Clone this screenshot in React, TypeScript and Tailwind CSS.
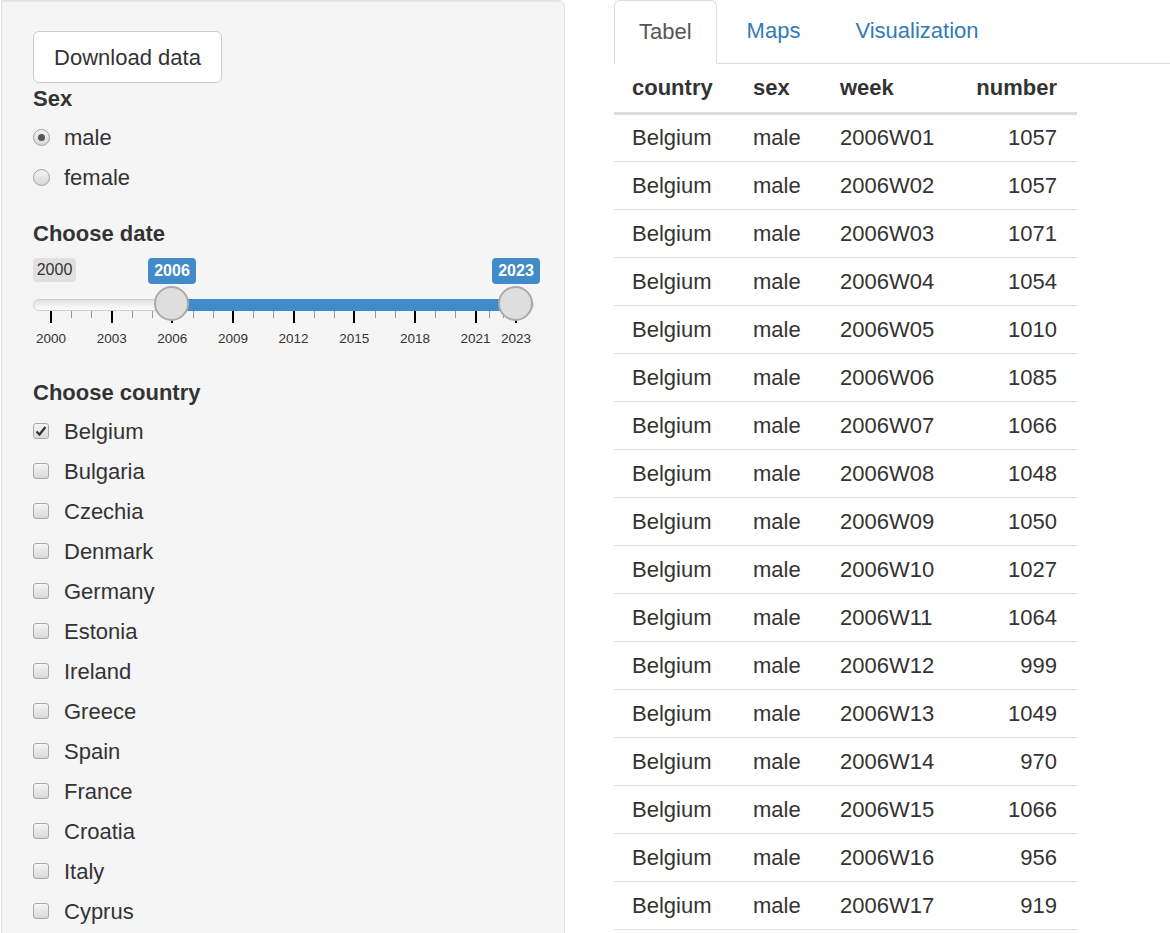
import React from "react";

const countries = [
  "Belgium",
  "Bulgaria",
  "Czechia",
  "Denmark",
  "Germany",
  "Estonia",
  "Ireland",
  "Greece",
  "Spain",
  "France",
  "Croatia",
  "Italy",
  "Cyprus",
];

const numbers = [1057, 1057, 1071, 1054, 1010, 1085, 1066, 1048, 1050, 1027, 1064, 999, 1049, 970, 1066, 956, 919];

const rows = numbers.map((n, i) => ({
  country: "Belgium",
  sex: "male",
  week: `2006W${String(i + 1).padStart(2, "0")}`,
  number: n,
}));

// slider geometry, px inside the slider box (box starts at x=32)
const yearX = (y: number) => 18 + (y - 2000) * 20.22;
const majors = [2000, 2003, 2006, 2009, 2012, 2015, 2018, 2021, 2023];
const minors = [2001, 2002, 2004, 2005, 2007, 2008, 2010, 2011, 2013, 2014, 2016, 2017, 2019, 2020];

const Radio = ({ checked }: { checked?: boolean }) => (
  <span className="w-[17px] h-[17px] rounded-full border border-[#a0a0a0] bg-gradient-to-b from-[#f4f4f4] to-[#d8d8d8] flex items-center justify-center shrink-0">
    {checked && <span className="w-[7px] h-[7px] rounded-full bg-[#555]"></span>}
  </span>
);

const Checkbox = ({ checked }: { checked?: boolean }) => (
  <span className="w-[16px] h-[16px] rounded-[3px] border border-[#a9a9a9] bg-gradient-to-b from-[#f6f6f6] to-[#dadada] flex items-center justify-center shrink-0">
    {checked && (
      <svg width="12" height="12" viewBox="0 0 12 12">
        <path d="M1.5 6.5 L4.5 9.5 L10.5 2" fill="none" stroke="#333" strokeWidth="2.2" />
      </svg>
    )}
  </span>
);

const DateSlider = () => (
  <div className="relative w-[501px] h-[106px]">
    {/* min label */}
    <div className="absolute left-0 top-[8px] h-[24px] w-[43px] rounded-[4px] bg-[#e0e0e0] text-[16px] leading-[24px] text-center text-[#333]">
      2000
    </div>
    {/* track */}
    <div className="absolute left-0 top-[49px] w-[501px] h-[12px] rounded-full border border-[#cfcfcf] bg-gradient-to-b from-[#e2e2e2] to-[#fdfdfd]"></div>
    <div className="absolute left-[139px] top-[49px] w-[344px] h-[12px] bg-[#428bca]"></div>
    {/* grid */}
    {minors.map((y) => (
      <div key={y} className="absolute top-[61px] w-px h-[7px] bg-[#999]" style={{ left: yearX(y) }}></div>
    ))}
    <div className="absolute top-[61px] w-px h-[7px] bg-[#999]" style={{ left: 456 }}></div>
    <div className="absolute top-[61px] w-px h-[7px] bg-[#999]" style={{ left: 470 }}></div>
    {majors.map((y) => (
      <div key={y} className="absolute top-[61px] w-[2px] h-[12px] bg-black" style={{ left: (y === 2023 ? 483 : yearX(y)) - 1 }}></div>
    ))}
    {majors.map((y) => (
      <div
        key={y}
        className="absolute top-[80px] w-[40px] -ml-[20px] text-center text-[13.5px] leading-[18px] text-[#333]"
        style={{ left: y === 2023 ? 483 : yearX(y) }}
      >
        {y}
      </div>
    ))}
    {/* from / to labels */}
    <div className="absolute left-[115px] top-[8px] h-[26px] w-[48px] rounded-[4px] bg-[#428bca] text-white font-bold text-[16px] leading-[26px] text-center">
      2006
    </div>
    <div className="absolute left-[459px] top-[8px] h-[26px] w-[48px] rounded-[4px] bg-[#428bca] text-white font-bold text-[16px] leading-[26px] text-center">
      2023
    </div>
    {/* handles */}
    <div className="absolute left-[121px] top-[36px] w-[35px] h-[35px] rounded-full border-2 border-[#aaa] bg-[#dedede]"></div>
    <div className="absolute left-[465px] top-[36px] w-[35px] h-[35px] rounded-full border-2 border-[#aaa] bg-[#dedede]"></div>
  </div>
);

export default function App() {
  return (
    <div
      className="w-[1170px] h-[933px] overflow-hidden bg-white flex text-[#333] text-[22px]"
      style={{ fontFamily: '"Liberation Sans", Arial, sans-serif' }}
    >
      {/* sidebar */}
      <aside className="w-[564px] shrink-0 ml-[1px] h-[1200px] bg-[#f5f5f5] border border-[#e3e3e3] rounded-tr-[6px] shadow-[inset_0_1px_1px_rgba(0,0,0,0.05)] pl-[31px] pt-[30px]">
        <button className="h-[52px] w-[189px] rounded-[6px] border border-[#ccc] bg-white text-[22px] text-[#333]">
          Download data
        </button>
        <div className="font-bold leading-[32px]">Sex</div>
        <div className="mt-[2px] flex flex-col">
          <label className="h-[40px] flex items-center gap-[14px]">
            <Radio checked />
            <span>male</span>
          </label>
          <label className="h-[40px] flex items-center gap-[14px]">
            <Radio />
            <span>female</span>
          </label>
        </div>
        <div className="mt-[21px] font-bold leading-[32px]">Choose date</div>
        <DateSlider />
        <div className="mt-[21px] font-bold leading-[32px]">Choose country</div>
        <div className="mt-[2px] flex flex-col">
          {countries.map((c, i) => (
            <label key={c} className="h-[40px] flex items-center gap-[15px]">
              <Checkbox checked={i === 0} />
              <span>{c}</span>
            </label>
          ))}
        </div>
      </aside>

      {/* main */}
      <main className="flex-1 ml-[49px]">
        <ul className="flex border-b border-[#ddd] h-[64px]">
          <li className="-mb-px h-[64px] px-[24px] border border-[#ddd] border-b-transparent rounded-t-[6px] bg-white text-[#555] flex items-center pb-[2px]">
            Tabel
          </li>
          <li className="ml-[3px] h-[63px] pl-[27px] pr-[26px] text-[#337ab7] flex items-center pb-[2px]">Maps</li>
          <li className="ml-[3px] h-[63px] px-[26px] text-[#337ab7] flex items-center pb-[2px]">Visualization</li>
        </ul>
        <table className="w-[463px] border-collapse">
          <thead>
            <tr className="h-[49px] border-b-[3px] border-[#ddd]">
              <th className="w-[121px] pl-[18px] text-left font-bold">country</th>
              <th className="w-[87px] pl-[18px] text-left font-bold">sex</th>
              <th className="w-[133px] pl-[18px] text-left font-bold">week</th>
              <th className="w-[122px] pr-[20px] text-right font-bold">number</th>
            </tr>
          </thead>
          <tbody>
            {rows.map((r) => (
              <tr key={r.week} className="h-[48px] border-b border-[#ddd]">
                <td className="pl-[18px]">{r.country}</td>
                <td className="pl-[18px]">{r.sex}</td>
                <td className="pl-[18px]">{r.week}</td>
                <td className="pr-[20px] text-right">{r.number}</td>
              </tr>
            ))}
          </tbody>
        </table>
      </main>
    </div>
  );
}
